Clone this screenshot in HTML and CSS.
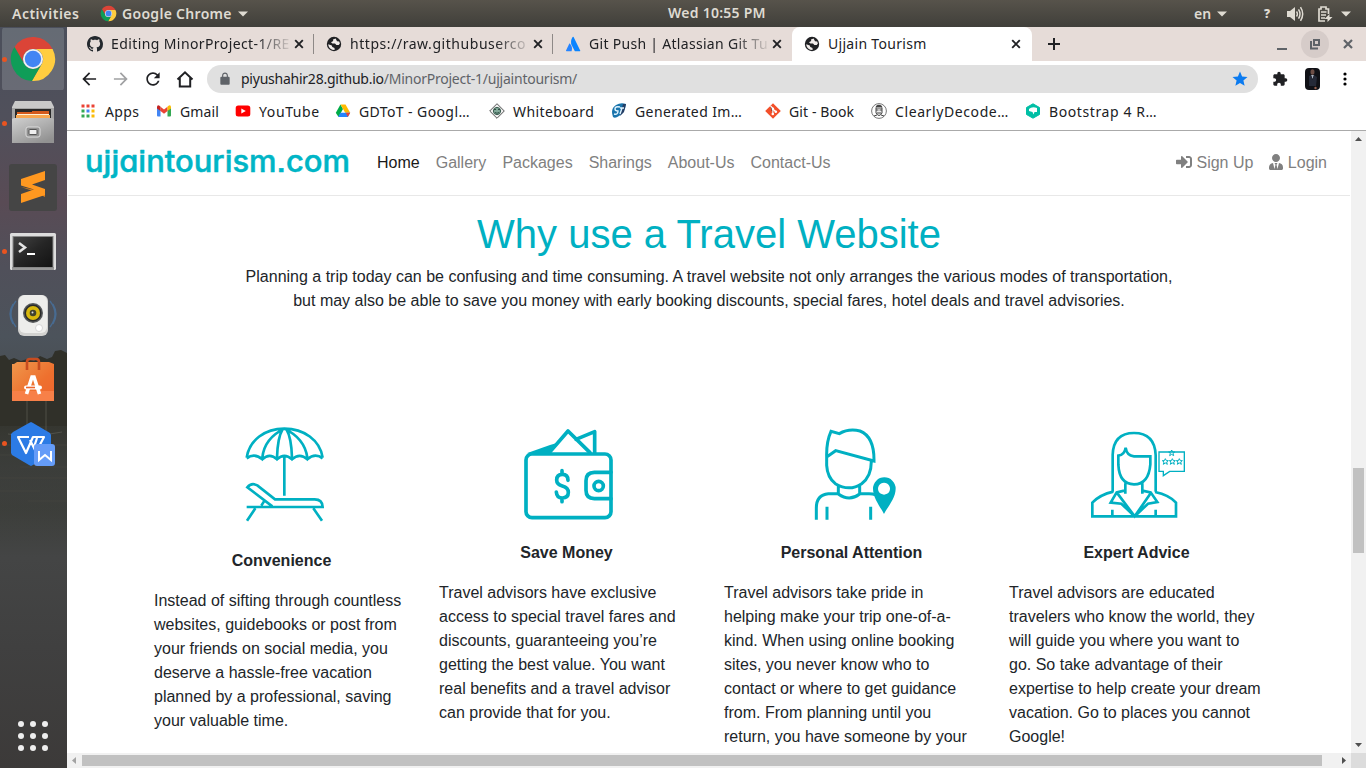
FILE: index.html
```html
<!DOCTYPE html>
<html lang="en">
<head>
<meta charset="utf-8">
<title>Ujjain Tourism</title>
<link rel="stylesheet" href="styles.css">
</head>
<body>
<svg class="defs" width="0" height="0" aria-hidden="true">
  <symbol id="chrome" viewBox="0 0 48 48">
    <path fill="#db4437" d="M5.5 12A22 22 0 0 1 43.6 14H24A10 10 0 0 0 15.3 29z"/>
    <path fill="#ffcd40" d="M43.6 14A22 22 0 0 1 22.9 46L32.7 29A10 10 0 0 0 24 14z"/>
    <path fill="#0f9d58" d="M22.9 46A22 22 0 0 1 5.5 12L15.3 29A10 10 0 0 0 32.7 29z"/>
    <circle cx="24" cy="24" r="10" fill="#f1f1f1"/><circle cx="24" cy="24" r="8.2" fill="#4285f4"/>
  </symbol>
  <symbol id="globe" viewBox="0 0 16 16">
    <circle cx="8" cy="8" r="7.2" fill="#202124"/>
    <path d="M9.6 2.5 7 3.4 7.2 5 5 6.2 6.4 7.5H9l1.400 1.600h2.300l1.200-1.700-.7-2L11 5.200zM2.200 8.200l3.600 1.200.5 1.700 2.200.8.1 2.100-2.400-.2C3.600 12.700 2.400 10.700 2.200 8.200z" fill="#f2edeb"/>
  </symbol>
  <symbol id="close" viewBox="0 0 16 16"><path d="m4.200 4.200 7.600 7.600m0-7.600-7.600 7.600" stroke="currentColor" stroke-width="1.900" fill="none"/></symbol>
  <symbol id="caret" viewBox="0 0 10 6"><path d="M0 .5h10L5 5.500z" fill="currentColor"/></symbol>
  <symbol id="back" viewBox="0 0 24 24"><path fill="currentColor" d="M20.500 11H7.830l5.590-5.590L12 4l-8 8 8 8 1.410-1.410L7.830 13h12.670z"/></symbol>
</svg>

<header class="topbar">
  <span class="activities">Activities</span>
  <svg class="app-logo"><use href="#chrome"/></svg>
  <span class="app-name">Google Chrome</span>
  <svg class="caret"><use href="#caret"/></svg>
  <time class="clock">Wed 10:55 PM</time>
  <div class="tray">
    <span class="lang">en</span>
    <svg class="caret"><use href="#caret"/></svg>
    <b class="help">?</b>
    <svg class="volume" viewBox="0 0 18 16"><path fill="currentColor" d="M1 5h3l5-4v14l-5-4H1z"/><path fill="none" stroke="currentColor" stroke-width="1.500" d="M10.500 5.500q1.800 2.500 0 5m2-7.200q3 4.700 0 9.400m2-11.500q4.400 6.800 0 13.600"/></svg>
    <svg class="battery" viewBox="0 0 16 16"><path fill="none" stroke="currentColor" stroke-width="1.700" d="M8 15H2V3h2V1h5v2h2.500v5M4 6h5.500M4 9h5M4 12h4"/><path fill="currentColor" d="m12.500 8-5 5h3v3l5-5h-3z"/></svg>
    <svg class="caret"><use href="#caret"/></svg>
  </div>
</header>

<div class="desktop">
  <nav class="dock">
    <svg class="scenery" viewBox="0 0 67 741" preserveAspectRatio="none">
      <defs><linearGradient id="water" x2="0" y2="1"><stop stop-color="#353630"/><stop offset="1" stop-color="#404141" stop-opacity="0"/></linearGradient></defs>
      <path fill="#303029" d="M0 329l5-1 4 5 5-2 7 3 6-2 7 2 6-5 7 3 5-2 3-6 6-1 6 3v73H0z"/>
      <path fill="url(#water)" d="M0 399h67v120H0z"/>
      <path stroke="#5c5b55" stroke-width=".7" fill="none" d="M27 335v72M46 343v64M8 407q24 4 54-2"/>
      <path stroke="#464741" stroke-width=".6" d="M0 418h67M0 428h50M20 440h47M0 451h67M0 464h40M28 474h39"/>
    </svg>
    <div class="slot current"><i class="dot"></i>
      <svg viewBox="0 0 48 48"><use href="#chrome"/></svg></div>
    <div class="slot"><i class="dot"></i>
      <svg viewBox="0 0 48 48">
        <defs><linearGradient id="steel" x2=".7" y2="1"><stop stop-color="#d0d0d0"/><stop offset="1" stop-color="#929292"/></linearGradient></defs>
        <path fill="#c9c9c9" d="M6 2h36l3 6v36H3V8z"/><path fill="#a5a5a5" d="M3 9h42v20H3z"/><path fill="#292929" d="M6 10h36v13H6z"/>
        <path fill="#d45a1c" d="M8 13h15v-1h17v8H8z"/><path fill="#f8a750" d="M7 16h34v7H7z"/><path stroke="#fff2d8" d="M8 15.500h32"/>
        <path fill="url(#steel)" d="M5 19h38l2 1v24H3V20z"/><rect x="17" y="28" width="14" height="10" rx="2" fill="#919191" stroke="#ddd"/><rect x="20" y="30.500" width="8" height="5" rx="1" fill="#eee" stroke="#555"/>
      </svg></div>
    <div class="slot low">
      <svg viewBox="0 0 48 48"><rect y="0" width="48" height="47" rx="3" fill="#454545"/><path fill="#dc7d18" d="m12 23 24 5v5l-12-6z"/><path fill="#ff9820" d="m12 15 24-8v9l-13 4.500 13 4.500v6l-24 8v-9l13-4.500-13-4z"/></svg></div>
    <div class="slot low"><i class="dot"></i>
      <svg viewBox="0 0 48 48"><defs><linearGradient id="screen" x2="1" y2="1"><stop stop-color="#444"/><stop offset=".5" stop-color="#252525"/><stop offset="1" stop-color="#121212"/></linearGradient></defs><rect x="1" y="5" width="46" height="37" rx="1.500" fill="#ddd"/><path fill="#999" d="M3 39h42v3H3z"/><rect x="4" y="8.500" width="40" height="31" fill="url(#screen)" stroke="#888"/><path fill="none" stroke="#e5e5e5" stroke-width="2.500" d="m10 15 6 4.500-6 4.500"/><path stroke="#fff" stroke-width="2" d="M18 26h8"/></svg></div>
    <div class="slot">
      <svg viewBox="0 0 48 48"><path fill="none" stroke="#486b91" stroke-width="1.300" d="M7 10q-10 13 0 26M4 13q-6 10 0 20m37-23q10 13 0 26m3-23q6 10 0 20"/><rect x="9" y="4" width="30" height="41" rx="6" fill="#d2d2d0"/><rect x="10" y="4" width="28" height="38" rx="6" fill="#ededeb"/><circle cx="24" cy="22" r="10" fill="#55585a"/><circle cx="24" cy="22" r="8.500" fill="#292a2a"/><circle cx="24" cy="22" r="7" fill="#d8b80d"/><circle cx="24" cy="22" r="3.300" fill="#40432d"/><circle cx="23.500" cy="21.500" r="1" fill="#ddd"/><circle cx="30" cy="37" r="3.500" fill="#fff" stroke="#d5d5d5"/></svg></div>
    <div class="slot low">
      <svg viewBox="0 0 48 48"><defs><linearGradient id="bag" x2="1" y2="1"><stop stop-color="#ef974c"/><stop offset=".6" stop-color="#ee702e"/><stop offset="1" stop-color="#ef642e"/></linearGradient></defs><path fill="url(#bag)" d="m5 8 3-2h32l5 2v37H3V8z"/><path fill="#f78048" d="M3 35h42v10H3z"/><path fill="none" stroke="#c74c20" stroke-width="2.600" d="M18 14V6q0-3 3-3h6q3 0 3 3v8"/><path fill="none" stroke="#fff" stroke-width="3.600" d="m17.500 38 5.500-17h2l5.500 17"/><rect x="15" y="29.500" width="18" height="4" rx="2" fill="#fff"/><path stroke="#ed642d" stroke-width="1.600" d="M17 31.500h9"/></svg></div>
    <div class="slot low"><i class="dot"></i>
      <svg viewBox="0 0 48 48"><path fill="#2c7be5" d="m20 3 2-1 2 1 17 10 1 2v19L24 45l-2 1-2-1L3 35l-1-2V14l2-2z"/><path fill="none" stroke="#fff" stroke-width="2.200" stroke-linejoin="round" d="M20 17H9l8 16 7-16h11l-8 15-6-12M28 18l-3 9"/><rect x="25" y="24" width="21" height="22" rx="3" fill="#659cf8"/><path fill="none" stroke="#fff" stroke-width="2" d="M30 31v9l6-5 6 5v-9"/></svg></div>
    <svg class="all-apps" viewBox="0 0 32 32" fill="#eee"><circle cx="4" cy="4" r="3"/><circle cx="16" cy="4" r="3"/><circle cx="28" cy="4" r="3"/><circle cx="4" cy="16" r="3"/><circle cx="16" cy="16" r="3"/><circle cx="28" cy="16" r="3"/><circle cx="4" cy="28" r="3"/><circle cx="16" cy="28" r="3"/><circle cx="28" cy="28" r="3"/></svg>
  </nav>

  <main class="browser">
    <div class="tabs">
      <div class="tab">
        <svg class="ico" viewBox="0 0 16 16"><path fill="#24292e" d="M8 0C3.580 0 0 3.580 0 8c0 3.540 2.290 6.530 5.470 7.590.4.070.55-.17.55-.38 0-.19-.01-.82-.01-1.490-2.010.37-2.530-.49-2.690-.94-.09-.23-.48-.94-.82-1.130-.28-.15-.68-.52-.01-.53.63-.01 1.080.58 1.230.82.72 1.210 1.870.87 2.330.66.07-.52.28-.87.51-1.070-1.780-.2-3.640-.89-3.640-3.950 0-.87.31-1.590.82-2.150-.08-.2-.36-1.020.08-2.120 0 0 .67-.21 2.200.82.64-.18 1.320-.27 2-.27s1.360.09 2 .27c1.530-1.040 2.200-.82 2.200-.82.44 1.100.16 1.920.08 2.120.51.56.82 1.270.82 2.150 0 3.070-1.870 3.750-3.650 3.950.29.25.54.73.54 1.480 0 1.070-.01 1.930-.01 2.200 0 .21.15.46.55.38A8.010 8.010 0 0 0 16 8c0-4.420-3.580-8-8-8z"/></svg>
        <span class="tab-title fade t1">Editing MinorProject-1/RE</span><svg class="close"><use href="#close"/></svg>
      </div>
      <div class="tab"><svg class="ico"><use href="#globe"/></svg><span class="tab-title fade t2">https://raw.githubuserco</span><svg class="close"><use href="#close"/></svg></div>
      <div class="tab last"><svg class="ico" viewBox="0 0 16 16"><path fill="#2684ff" d="M4.500 7.300 1 14.500q-.2.800.6.800h5q1.500-4.500-2.100-8z"/><path fill="#0a84ff" d="M7.600 1q-3 4.500-.6 8.800l2.600 5q.3.500.8.500h4.400q.8 0 .4-.8L8.600 1q-.5-.6-1 0z"/></svg><span class="tab-title fade t3">Git Push | Atlassian Git Tu</span><svg class="close"><use href="#close"/></svg></div>
      <div class="tab active"><svg class="ico"><use href="#globe"/></svg><span class="tab-title t4">Ujjain Tourism</span><svg class="close"><use href="#close"/></svg></div>
      <svg class="new-tab" viewBox="0 0 14 14"><path d="M7 1v12M1 7h12" stroke="#202124" stroke-width="2"/></svg>
      <div class="window-buttons">
        <svg viewBox="0 0 28 28"><path d="M9 19h10" stroke="#5f6368" stroke-width="2"/></svg>
        <svg class="restore" viewBox="0 0 28 28"><path d="M13 10h5v5h-5zM10 11v7.500h7" fill="none" stroke="#5f6368" stroke-width="2"/></svg>
        <svg viewBox="0 0 28 28"><path d="m10 10 8 8m0-8-8 8" stroke="#5f6368" stroke-width="2.200"/></svg>
      </div>
    </div>

    <div class="toolbar">
      <svg class="tool"><use href="#back"/></svg>
      <svg class="tool forward"><use href="#back"/></svg>
      <svg class="tool" viewBox="0 0 24 24"><path fill="currentColor" d="M17.650 6.350C16.200 4.900 14.210 4 12 4c-4.420 0-7.990 3.580-7.990 8s3.570 8 7.990 8c3.730 0 6.840-2.550 7.730-6h-2.080c-.82 2.330-3.040 4-5.650 4-3.310 0-6-2.690-6-6s2.690-6 6-6c1.660 0 3.140.69 4.220 1.780L13 11h7V4z"/></svg>
      <svg class="tool" viewBox="0 0 20 20"><path fill="none" stroke="currentColor" stroke-width="2" d="M2.500 10.500 10 3.300l7.500 7.200M4.800 9v8.500h10.400V9"/></svg>
      <div class="omnibox">
        <svg class="lock" viewBox="0 0 24 24"><path fill="#5f6368" d="M18 8h-1V6c0-2.760-2.240-5-5-5S7 3.240 7 6v2H6c-1.100 0-2 .9-2 2v10c0 1.100.9 2 2 2h12c1.100 0 2-.9 2-2V10c0-1.100-.9-2-2-2zM9 6c0-1.660 1.340-3 3-3s3 1.340 3 3v2H9z"/></svg>
        <span class="url">piyushahir28.github.io<span class="path">/MinorProject-1/ujjaintourism/</span></span>
        <svg class="star" viewBox="0 0 24 24"><path fill="#0b7bf0" d="M12 17.270 18.180 21l-1.640-7.030L22 9.240l-7.190-.61L12 2 9.190 8.630 2 9.240l5.460 4.730L5.820 21z"/></svg>
      </div>
      <svg class="extensions" viewBox="0 0 24 24"><path fill="#202124" d="M20.500 11H19V7c0-1.100-.9-2-2-2h-4V3.500C13 2.120 11.880 1 10.500 1S8 2.120 8 3.500V5H4c-1.100 0-1.990.9-1.990 2v3.800H3.500c1.490 0 2.700 1.210 2.700 2.700s-1.210 2.700-2.700 2.700H2V20c0 1.100.9 2 2 2h3.800v-1.500c0-1.490 1.210-2.700 2.700-2.700s2.700 1.210 2.700 2.700V22H17c1.100 0 2-.9 2-2v-4h1.500a2.500 2.500 0 0 0 0-5z"/></svg>
      <svg class="avatar" viewBox="0 0 15 22"><rect width="15" height="22" rx="4" fill="#101116"/><ellipse cx="7.500" cy="4" rx="2" ry="2.800" fill="#6c4e46"/><path fill="#a8b1c0" d="m6 7 1.500 4L9 7z"/><path fill="#252a38" d="m4 8 2-1 1.500 5L9 7l3 2-1 9H4z"/><circle cx="10.500" cy="20" r="1.200" fill="#95614e"/></svg>
      <svg class="menu" viewBox="0 0 4 16"><circle cx="2" cy="3" r="1.600"/><circle cx="2" cy="8" r="1.600"/><circle cx="2" cy="13" r="1.600"/></svg>
    </div>

    <div class="bookmarks">
      <a class="bm b1"><svg class="ico" viewBox="0 0 16 16"><path fill="#ea4335" d="M1.500 1.500h3v3h-3zm5 0h3v3h-3zm5 0h3v3h-3z"/><path fill="#4285f4" d="M6.500 6.500h3v3h-3z"/><path fill="#34a853" d="M1.500 6.500h3v3h-3zm0 5h3v3h-3zm5 0h3v3h-3z"/><path fill="#fbbc05" d="M11.500 6.500h3v3h-3zm0 5h3v3h-3z"/></svg><span>Apps</span></a>
      <a class="bm b2"><svg class="ico" viewBox="0 0 16 16"><path fill="#4285f4" d="M1 4.500 4.500 7v6.500H2q-1 0-1-1z"/><path fill="#34a853" d="M15 4.500 11.500 7v6.500H14q1 0 1-1z"/><path fill="#ea4335" d="M4.500 3.800 8 6.500l3.500-2.700V8L8 10.700 4.500 8z"/><path fill="#c5221f" d="M1 4q.2-2.500 2.500-1.200l1 1V8L1 5.500z"/><path fill="#fbbc04" d="M15 4q-.2-2.500-2.500-1.200l-1 1V8L15 5.500z"/></svg><span>Gmail</span></a>
      <a class="bm b3"><svg class="ico" viewBox="0 0 16 16"><rect x=".7" y="2.500" width="14.600" height="11" rx="2.500" fill="#f00"/><path fill="#fff" d="m6.300 5.500 4.500 2.500-4.500 2.500z"/></svg><span>YouTube</span></a>
      <a class="bm b4"><svg class="ico" viewBox="0 0 16 16"><path fill="#00ac47" d="M5.500 1.500 8 6l-4.500 8L.8 9.700z"/><path fill="#ffba00" d="M5.500 1.500h5l4.700 8.200h-5z"/><path fill="#2684fc" d="M5.300 9.700h9.900L12.800 14H3.200z"/><path fill="#ea4335" d="M10.800 9.700h4.400L12.800 14z"/></svg><span>GDToT - Googl…</span></a>
      <a class="bm b5"><svg class="ico" viewBox="0 0 16 16"><path fill="#eee" stroke="#555" d="m8 .7 7.300 7.300L8 15.300.7 8z"/><circle cx="8" cy="8" r="3.600" fill="#80a898" stroke="#36584b"/><path stroke="#2f4e43" d="M5 6.500h2m2 0h2M6 9.500q2 1.500 4 0" fill="none"/></svg><span>Whiteboard</span></a>
      <a class="bm b6"><svg class="ico" viewBox="0 0 16 16"><path fill="#1974ac" d="M5 2q5-3 10-1-1 9-7 12-4 3-6 1Q-1 6 5 2z"/><path fill="#253e65" d="m12 1 3 0-2 8-4 4z"/><path fill="none" stroke="#e0f4ff" stroke-width="1.400" d="M9 4Q4 3 4 6q0 2 3 2 0 4-4 3M9 5h4m-2 0-2 6"/></svg><span>Generated Im…</span></a>
      <a class="bm b7"><svg class="ico" viewBox="0 0 16 16"><path fill="#f34f29" d="m8 .2 7.800 7.800L8 15.800.2 8z"/><path d="m5.500 3 2.300 2.300v6M8 6l3 3" stroke="#fff" stroke-width="1.200"/><circle cx="7.800" cy="5.700" r="1.300" fill="#fff"/><circle cx="7.800" cy="11" r="1.300" fill="#fff"/><circle cx="10.800" cy="8.700" r="1.300" fill="#fff"/></svg><span>Git - Book</span></a>
      <a class="bm b8"><svg class="ico" viewBox="0 0 16 16"><circle cx="8" cy="8" r="7.400" fill="#fff" stroke="#777"/><path fill="#eee" stroke="#444" d="M5 5h6v5q-3 5-6 0z"/><path fill="#444" d="M4.500 5q.5-3.500 3.500-3.300 3 0 3.500 3.300L10 4H6z"/><path d="M5 7h2.500M8.500 7H11M6 10h4M3 13l3-1m7 1-3-1" stroke="#444"/></svg><span>ClearlyDecode…</span></a>
      <a class="bm b9"><svg class="ico" viewBox="0 0 16 16"><path fill="#00bfa5" stroke="#00bfa5" stroke-linejoin="round" d="m8 .8 6.500 3.700v7L8 15.200l-6.500-3.700v-7z"/><path fill="#fff" d="M4 6q3-3 8-1v4H9.500l-1 2.500-1-2.500L4 8z"/></svg><span>Bootstrap 4 R…</span></a>
    </div>

    <div class="viewport">
      <div class="page">
        <nav class="site-nav">
          <svg class="brand" viewBox="0 0 266 36"><text x="0" y="27" textLength="265" lengthAdjust="spacingAndGlyphs">ujjaintourism.com</text></svg>
          <a class="link home">Home</a><a class="link">Gallery</a><a class="link">Packages</a><a class="link">Sharings</a><a class="link">About-Us</a><a class="link">Contact-Us</a>
          <div class="account">
            <a class="link"><svg class="fa" viewBox="0 0 512 512"><path d="M416 448h-84c-6.600 0-12-5.400-12-12v-40c0-6.600 5.400-12 12-12h84c17.700 0 32-14.300 32-32V160c0-17.700-14.300-32-32-32h-84c-6.600 0-12-5.400-12-12V76c0-6.600 5.400-12 12-12h84c53 0 96 43 96 96v192c0 53-43 96-96 96zm-47-209L201 71c-15-15-41-4.500-41 17v96H24c-13.300 0-24 10.700-24 24v96c0 13.300 10.700 24 24 24h136v96c0 21.500 26 32 41 17l168-168c9.300-9.400 9.300-24.600 0-34z"/></svg> Sign Up</a>
            <a class="link"><svg class="fa tie" viewBox="0 0 448 512"><path d="M224 256c70.700 0 128-57.300 128-128S294.700 0 224 0 96 57.300 96 128s57.300 128 128 128zm95.800 32.600L272 480l-32-136 32-56h-96l32 56-32 136-47.800-191.400C56.900 292 0 350.300 0 422.400V464c0 26.500 21.500 48 48 48h352c26.500 0 48-21.500 48-48v-41.600c0-72.100-56.900-130.400-128.200-133.800z"/></svg> Login</a>
          </div>
        </nav>
        <section class="intro">
          <h1>Why use a Travel Website</h1>
          <p>Planning a trip today can be confusing and time consuming. A travel website not only arranges the various modes of transportation,<br>but may also be able to save you money with early booking discounts, special fares, hotel deals and travel advisories.</p>
        </section>
        <section class="benefits">
          <article class="benefit tall">
            <svg class="art" viewBox="-228 0 765 360"><path d="M50 128C58 75 105 41 163 41s107 34 115 87M97 128Q103 70 163 41M141 128Q143 67 158 42M186 128Q184 67 169 42M232 128Q224 70 163 41M50 130Q73 112 97 133 119 112 141 133 163 112 186 133 209 112 232 133 255 112 278 130M163 122v120M50 276h228q-1-23-24-23H135L82 211q-18-9-30 6l75 57M94 272l10-16M76 280l-25 37M250 280l26 37"/></svg>
            <h2>Convenience</h2>
            <p>Instead of sifting through countless websites, guidebooks or post from your friends on social media, you deserve a hassle-free vacation planned by a professional, saving your valuable time.</p>
          </article>
          <article class="benefit">
            <svg class="art wallet" viewBox="-213 0 765 360"><rect x="48" y="117" width="255" height="191" rx="18"/><path d="M118 113l56-65 66 65M198 73l56-23v64M303 172h-50q-25 0-25 25v29q0 25 25 25h50M174 196q0-18-17-18-17 0-17 17 0 13 17 18 18 5 18 19 0 17-18 17-17 0-18-18M156 167v11M156 249v11"/><path class="solid" d="M50 115 120 90l18-5-25 31z"/><circle cx="266" cy="213" r="14"/></svg>
            <h2>Save Money</h2>
            <p>Travel advisors have exclusive access to special travel fares and discounts, guaranteeing you’re getting the best value. You want real benefits and a travel advisor can provide that for you.</p>
          </article>
          <article class="benefit">
            <svg class="art person" viewBox="-228 0 765 360"><path d="M80 124Q79 80 93 49l25 7q28-16 62-8 43 17 42 90L107 107 80 126v25q2 36 26 55 42 25 79 0 29-21 29-67M115 211v26q33 24 64 0v-26M114 236H85q-36 3-36 43v35M81 275v39M180 236h27q12 0 20 4M212 275v39"/><path class="solid" fill-rule="evenodd" d="M252 297c-11-22-33-48-33-76a34 34 0 0 1 68 0c0 28-24 54-35 76zM252 203a18 18 0 1 0 .1 0z"/></svg>
            <h2>Personal Attention</h2>
            <p>Travel advisors take pride in helping make your trip one-of-a-kind. When using online booking sites, you never know who to contact or where to get guidance from. From planning until you return, you have someone by your</p>
          </article>
          <article class="benefit">
            <svg class="art" viewBox="-213 0 765 360"><path d="M98 230V120Q100 54 162 54t65 66v110M115 122q19-2 22-24 3 24 25 26h49v24q-5 60-49 60T115 149zM136 205v31M187 205v31M136 226l-26 6-18 31 32 3 40 38 40-38 28-5-20-29-25-5M110 232l54 72 50-72M100 230Q60 239 37 263v41h251v-41q-20-23-63-32M97 284v20M227 284v20"/><path class="fine" d="M237 111h76v58h-44l-19 13v-13h-13z"/><path class="fine star-line" d="M275 105l3 6h6l-5 4 2 7-6-4-6 4 2-7-5-4h6zM256 131l3 6h6l-5 4 2 7-6-4-6 4 2-7-5-4h6zM277 131l3 6h6l-5 4 2 7-6-4-6 4 2-7-5-4h6zM298 131l3 6h6l-5 4 2 7-6-4-6 4 2-7-5-4h6z"/></svg>
            <h2>Expert Advice</h2>
            <p>Travel advisors are educated travelers who know the world, they will guide you where you want to go. So take advantage of their expertise to help create your dream vacation. Go to places you cannot Google!</p>
          </article>
        </section>
      </div>
      <div class="vbar"><svg viewBox="0 0 15 15"><path d="m4 10 3.500-4L11 10z"/></svg><i></i><svg viewBox="0 0 15 15"><path d="m4 5 3.500 4L11 5z"/></svg></div>
      <div class="hbar"><svg class="off" viewBox="0 0 15 15"><path d="M9 4 5 7.500 9 11z"/></svg><i></i><svg viewBox="0 0 15 15"><path d="m6 4 4 3.500L6 11z"/></svg></div>
      <div class="corner"></div>
    </div>
  </main>
</div>
</body>
</html>
```

FILE: styles.css
```css
* { box-sizing: border-box; }
body { margin: 0; width: 1366px; height: 768px; overflow: hidden; font-family: "Noto Sans", sans-serif; background: #fff; }
svg { display: block; flex: none; }
.defs { position: absolute; }

.topbar { display: grid; grid-template-columns: 100px 22px 116px 10px 1fr auto; align-items: center; height: 27px; background: linear-gradient(#57534b, #403f3a); color: #dfdbd2; font-size: 14px; font-weight: 600; line-height: 26px; white-space: nowrap; }
.activities { padding-left: 12px; letter-spacing: .5px; }
.app-logo { width: 17px; height: 17px; }
.app-name { letter-spacing: .3px; }
.caret { width: 10px; height: 6px; }
.clock { margin-top: -1px; padding-left: 420px; letter-spacing: .25px; }
.tray { display: flex; align-items: center; width: 172px; }
.lang { width: 23px; }
.help { margin-left: 37px; width: 22px; font-size: 12px; }
.volume { width: 18px; height: 16px; }
.battery { width: 16px; height: 16px; margin: 0 8px 0 13px; }

.desktop { display: flex; height: 741px; }
.dock { position: relative; display: flex; flex-direction: column; width: 67px; background: linear-gradient(#4b4f5b 0, #50505b 90px, #594b55 175px, #50505a 240px, #4c535b 310px, #3c3e3a 480px, #444545 530px, #404040 620px, #3c3a39 741px); }
.scenery { position: absolute; inset: 0; width: 67px; height: 741px; }
.slot { position: relative; display: flex; align-items: center; justify-content: center; width: 62px; height: 64px; margin-left: 2px; }
.slot svg { width: 48px; height: 48px; }
.low { padding-top: 2px; }
.current { border-radius: 4px; background: linear-gradient(#656b74, #696b75) center / 62px 62px no-repeat; }
.dot { position: absolute; left: 0; top: 30px; width: 5px; height: 5px; border-radius: 50%; background: #e95420; }
.all-apps { position: relative; width: 32px; height: 32px; margin: auto 0 16px 17px; }

.browser { display: flex; flex-direction: column; width: 1299px; }
.tabs { display: flex; height: 34px; padding-left: 8px; background: #e6dcd8; color: #202124; }
.tab { display: flex; align-items: center; width: 239px; padding: 0 7px 0 12px; background: linear-gradient(#8e8987, #8e8987) right center / 1px 20px no-repeat; }
.tab.last { background: none; }
.tab.active { width: 240px; padding-right: 8px; background: #fff; border-radius: 8px 8px 0 0; }
.ico { width: 16px; height: 16px; }
.tab-title { flex: none; width: 180px; margin: 0 0 0 8px; font-size: 14px; line-height: 20px; white-space: nowrap; }
.t1 { letter-spacing: .4px; }
.t2 { letter-spacing: .55px; }
.t3 { letter-spacing: .3px; }
.t4 { letter-spacing: .3px; }
.fade { -webkit-mask-image: linear-gradient(90deg, #000 145px, transparent 182px); mask-image: linear-gradient(90deg, #000 145px, transparent 182px); }
.close { width: 16px; height: 16px; }
.new-tab { width: 14px; height: 14px; margin: 10px 0 0 15px; }
.window-buttons { display: flex; gap: 5px; margin: 3px 4px 0 auto; }
.window-buttons svg { width: 28px; height: 28px; }
.restore { border-radius: 50%; background: #d6ccc9; }

.toolbar { display: flex; align-items: center; height: 36px; padding-left: 12px; color: #202124; }
.tool { width: 20px; height: 20px; margin-right: 12px; }
.forward { color: #a0a1a3; transform: scaleX(-1); }
.omnibox { display: flex; align-items: center; width: 1051px; height: 28px; padding: 0 9px 0 11px; border-radius: 14px; background: #e0e0e0; }
.lock { width: 14px; height: 14px; margin-right: 9px; }
.url { flex: 1; font-size: 14px; line-height: 20px; letter-spacing: -.24px; color: #202124; }
.path { color: #5f6368; }
.star { width: 18px; height: 18px; }
.extensions { width: 16px; height: 16px; margin: 0 17px 0 14px; }
.avatar { width: 15px; height: 22px; margin-right: 23px; }
.menu { width: 4px; height: 16px; }

.bookmarks { display: flex; height: 34px; padding: 0 0 5px 13px; border-bottom: 1px solid #aaa; color: #202124; font-size: 14px; }
.bm { display: flex; align-items: center; gap: 8px; white-space: nowrap; letter-spacing: .4px; }
.b1 { width: 76px; gap: 9px; } .b2 { width: 79px; letter-spacing: .1px; } .b3 { width: 100px; letter-spacing: .6px; } .b4 { width: 154px; }
.b5 { width: 122px; } .b6 { width: 154px; } .b7 { width: 106px; letter-spacing: .1px; } .b8 { width: 154px; letter-spacing: .6px; } .b9 { letter-spacing: .6px; }

.viewport { display: grid; grid-template: 622px 15px / 1284px 15px; font-family: "Liberation Sans", Arial, sans-serif; }
.page { overflow: hidden; color: #212529; font-size: 16px; line-height: 24px; }
.site-nav { display: flex; align-items: center; height: 65px; margin: 0 1px; padding: 0 15px 0 17px; border-bottom: 1px solid #e8e8e8; }
.brand { width: 266px; height: 36px; margin-right: 18px; overflow: visible; fill: #00b5c6; font-family: Inter, sans-serif; font-feature-settings: "cv11", "ss07"; font-size: 30px; font-weight: 500; stroke: #00b5c6; stroke-width: .5; stroke-linejoin: round; }
.link { padding: 0 8px; color: #808080; white-space: nowrap; }
.home { color: #191919; }
.account { display: flex; margin-left: auto; }
.fa { display: inline-block; width: 16px; height: 16px; vertical-align: -2px; fill: #808080; }
.tie { width: 14px; }
.intro { height: 219px; padding-top: 14px; text-align: center; }
.intro h1 { margin: 0 0 7px; color: #00b0c2; font-size: 40px; font-weight: 400; line-height: 48px; }
.intro p { margin: 0; }
.benefits { display: grid; grid-template-columns: repeat(4, 285px); padding-left: 72px; }
.benefit { padding: 0 15px; }
.art { width: 255px; height: 120px; margin-bottom: 6px; fill: none; stroke: #00b0c2; stroke-width: 8; }
.tall .art { margin-bottom: 14px; }
.wallet { stroke-width: 11; stroke-linecap: round; stroke-linejoin: round; }
.person { stroke-width: 9; }
.art .solid { fill: #00b0c2; stroke: none; }
.art .fine { stroke-width: 4; }
.art .star-line { stroke-width: 3; }
.benefit h2 { margin: 0 0 16px; font-size: 16px; line-height: 24px; text-align: center; }
.benefit p { margin: 0; }

.vbar, .hbar { display: flex; background: #f1f1f1; fill: #505050; }
.vbar { flex-direction: column; justify-content: space-between; }
.vbar svg, .hbar svg { width: 15px; height: 15px; }
.vbar i { width: 11px; height: 85px; margin: 322px 2px auto; background: #c1c1c1; }
.hbar i { width: 1240px; height: 11px; margin: 2px auto 2px 0; background: #c1c1c1; }
.hbar .off { fill: #a3a3a3; }
.corner { background: #dcdcdc; }
```
